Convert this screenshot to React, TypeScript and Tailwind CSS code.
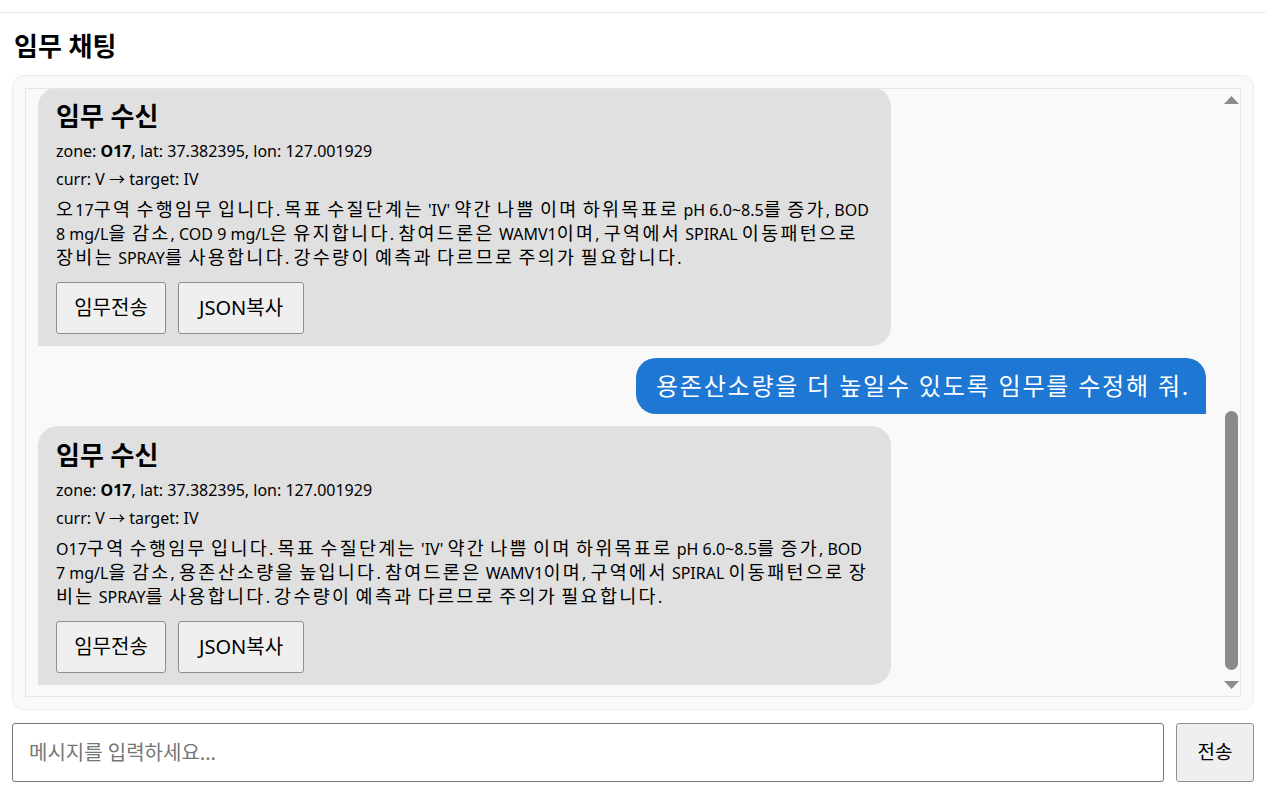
import { useLayoutEffect, useRef, useState } from 'react';

interface Mission {
  zone: string;
  lat: string;
  lon: string;
  curr: string;
  target: string;
  text: string;
}

type Message =
  | { id: number; role: 'user'; text: string }
  | { id: number; role: 'bot'; mission: Mission };

const font = { fontFamily: '"Noto Sans", "Noto Sans CJK KR", sans-serif' };

const baseMission: Mission = {
  zone: 'O17',
  lat: '37.382395',
  lon: '127.001929',
  curr: 'V',
  target: 'IV',
  text: ''
};

const initialMessages: Message[] = [
  {
    id: 1,
    role: 'bot',
    mission: {
      ...baseMission,
      text: "O17구역 수행임무 입니다. 목표 수질단계는 'IV' 약간 나쁨 이며 하위목표로 pH 6.0~8.5를 증가, BOD 8 mg/L을 감소, COD 9 mg/L은 유지합니다. 참여드론은 WAMV1이며, 구역에서 ZIGZAG 이동패턴으로 장비는 SPRAY를 사용합니다."
    }
  },
  { id: 2, role: 'user', text: '이동패턴을 바꿔서 다시 만들어 줘.' },
  {
    id: 3,
    role: 'bot',
    mission: {
      ...baseMission,
      text: "O17구역 수행임무 입니다. 목표 수질단계는 'IV' 약간 나쁨 이며 하위목표로 pH 6.0~8.5를 증가, BOD 8 mg/L을 감소, COD 9 mg/L은 유지합니다. 참여드론은 WAMV1이며, 구역에서 SPIRAL 이동패턴으로 장비는 SPRAY를 사용합니다."
    }
  },
  { id: 4, role: 'user', text: '강수량 정보도 반영해 줘.' },
  {
    id: 5,
    role: 'bot',
    mission: {
      ...baseMission,
      text: "오17구역 수행임무 입니다. 목표 수질단계는 'IV' 약간 나쁨 이며 하위목표로 pH 6.0~8.5를 증가, BOD 8 mg/L을 감소, COD 9 mg/L은 유지합니다. 참여드론은 WAMV1이며, 구역에서 SPIRAL 이동패턴으로 장비는 SPRAY를 사용합니다. 강수량이 예측과 다르므로 주의가 필요합니다."
    }
  },
  { id: 6, role: 'user', text: '용존산소량을 더 높일수 있도록 임무를 수정해 줘.' },
  {
    id: 7,
    role: 'bot',
    mission: {
      ...baseMission,
      text: "O17구역 수행임무 입니다. 목표 수질단계는 'IV' 약간 나쁨 이며 하위목표로 pH 6.0~8.5를 증가, BOD 7 mg/L을 감소, 용존산소량을 높입니다. 참여드론은 WAMV1이며, 구역에서 SPIRAL 이동패턴으로 장비는 SPRAY를 사용합니다. 강수량이 예측과 다르므로 주의가 필요합니다."
    }
  }
];

// hangul runs get a slightly wider face so mixed lines wrap like the original
function Mixed({ text }: { text: string }) {
  const parts = text.split(/([\uac00-\ud7a3]+)/);
  return (
    <>
      {parts.map((p, i) =>
        /[\uac00-\ud7a3]/.test(p) ? (
          <span key={i} className="text-[18.5px] leading-[16px] tracking-[2.3px]">
            {p}
          </span>
        ) : (
          p
        )
      )}
    </>
  );
}

function MissionBubble({ mission }: { mission: Mission }) {
  const btn =
    'h-[52px] rounded-[3px] border border-[#8f8f8f] bg-[#efefef] text-[20px] text-black';

  return (
    <div className="self-start w-[853px] shrink-0 rounded-[20px] rounded-bl-none bg-[#e0e0e0] pl-[18px] pr-4 pt-[14px] pb-3 text-black">
      <h3 className="text-[26px] font-bold leading-[30px]">임무 수신</h3>
      <p className="mt-2 text-[16px] leading-[24px]">
        zone: <strong>{mission.zone}</strong>, lat: {mission.lat}, lon: {mission.lon}
      </p>
      <p className="mt-1 text-[16px] leading-[24px]">
        curr: {mission.curr} → target: {mission.target}
      </p>
      <p className="mt-[7px] text-[16px] leading-[24px]">
        <Mixed text={mission.text} />
      </p>
      <div className="mt-3 flex gap-3">
        <button className={`${btn} w-[110px]`}>임무전송</button>
        <button className={`${btn} w-[126px]`}>JSON복사</button>
      </div>
    </div>
  );
}

function UserBubble({ text }: { text: string }) {
  return (
    <div className="self-end shrink-0 rounded-[20px] rounded-br-none bg-[#1e77d3] pl-5 pr-4 py-[11px] text-[24px] leading-[34px] tracking-[1.8px] text-white">
      {text}
    </div>
  );
}

function Arrow({ down }: { down?: boolean }) {
  return (
    <div className="flex h-[22px] items-center justify-center">
      <svg width="15" height="8" viewBox="0 0 15 8">
        <path d={down ? 'M0 0h15l-7.5 8z' : 'M0 8h15L7.5 0z'} fill="#8c8c8c" />
      </svg>
    </div>
  );
}

export default function App() {
  const [messages] = useState<Message[]>(initialMessages);
  const listRef = useRef<HTMLDivElement>(null);
  const [thumb, setThumb] = useState({ top: 0, height: 0 });

  function updateThumb() {
    const el = listRef.current;
    if (!el) return;
    const track = el.clientHeight - 44 - 8;
    const height = Math.max(30, (el.clientHeight / el.scrollHeight) * track);
    const max = el.scrollHeight - el.clientHeight;
    const top = max > 0 ? (el.scrollTop / max) * (track - height) : 0;
    setThumb({ top, height });
  }

  useLayoutEffect(() => {
    if (listRef.current) {
      listRef.current.scrollTop = listRef.current.scrollHeight;
    }
    updateThumb();
  }, [messages]);

  return (
    <div className="min-h-[792px] bg-white text-black" style={font}>
      <div className="h-[13px] border-b border-[#ececec]" />
      <div className="px-3">
        <h2 className="mt-[18px] mb-[14px] pl-[2px] text-[26px] font-bold leading-[30px]">임무 채팅</h2>

        <div className="rounded-[12px] border border-[#ececec] bg-[#f9f9f9] p-3">
          <div className="flex h-[609px] border border-[#e6e6e6] bg-[#f9f9f9]">
            <div
              ref={listRef}
              onScroll={updateThumb}
              className="flex flex-1 flex-col gap-3 overflow-y-scroll pt-3 pb-[11px] pl-3 pr-[17px] [scrollbar-width:none]"
            >
              {messages.map(m =>
                m.role === 'user' ? (
                  <UserBubble key={m.id} text={m.text} />
                ) : (
                  <MissionBubble key={m.id} mission={m.mission} />
                )
              )}
            </div>
            <div className="flex w-[17px] flex-col">
              <Arrow />
              <div className="relative my-[4px] flex-1">
                <div
                  className="absolute left-[2px] right-[2px] rounded-full bg-[#8a8a8a]"
                  style={{ top: thumb.top, height: thumb.height }}
                />
              </div>
              <Arrow down />
            </div>
          </div>
        </div>

        <div className="mt-[13px] flex gap-3">
          <input
            className="h-[59px] flex-1 rounded-[3px] border border-[#767676] bg-white px-4 text-[20px] text-black placeholder:text-[#757575] outline-none"
            placeholder="메시지를 입력하세요..."
          />
          <button className="h-[59px] w-[78px] rounded-[3px] border border-[#8f8f8f] bg-[#efefef] text-[19px]">
            전송
          </button>
        </div>
      </div>
    </div>
  );
}
